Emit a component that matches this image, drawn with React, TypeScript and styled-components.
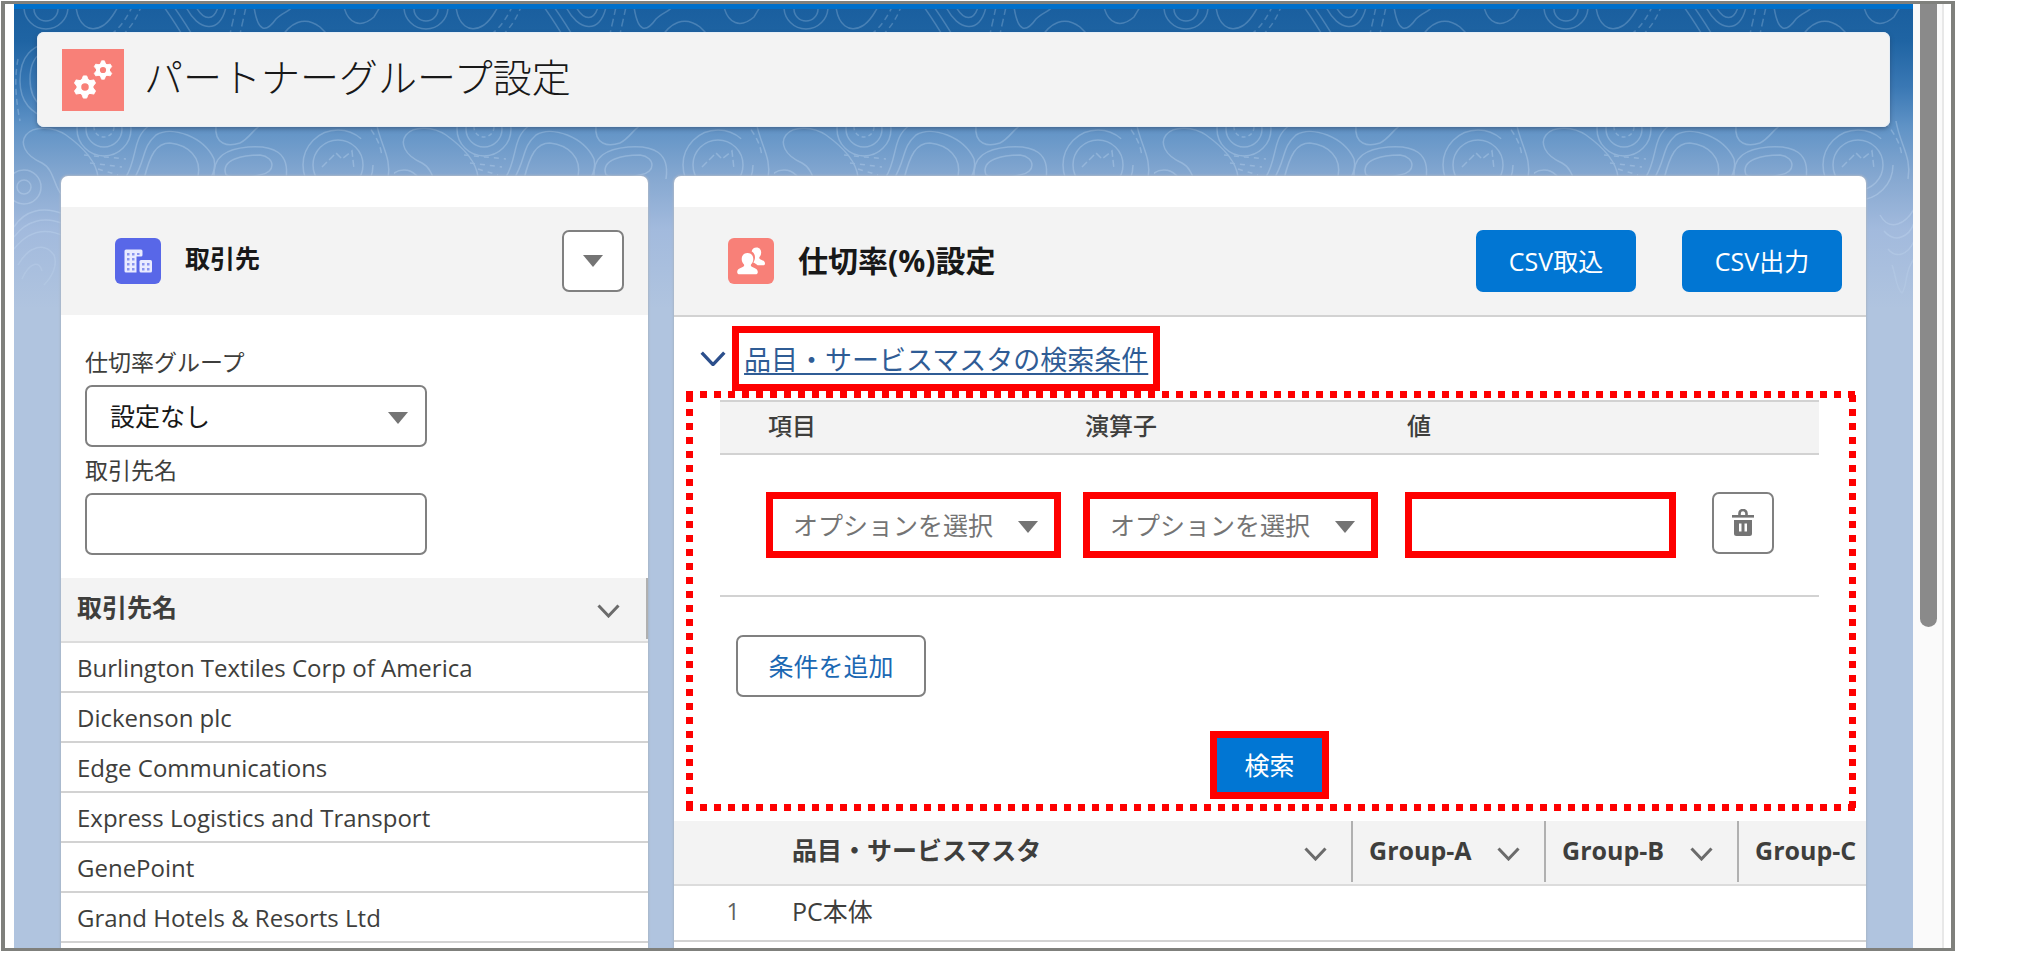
import React from "react";
import styled, { createGlobalStyle, css } from "styled-components";

const color = {
  text: "#3e3e3c",
  strong: "#181818",
  muted: "#747474",
  line: "#d2d2d2",
  band: "#f3f3f3",
  brand: "#0176d3",
  link: "#2f5c95",
  mark: "#fe0000",
  coral: "#f88078",
  indigo: "#5867e8",
  page: "#b0c4df",
};

const GlobalStyle = createGlobalStyle`
  *, *::before, *::after { box-sizing: border-box; }
  body {
    margin: 0;
    background: #fff;
    color: ${color.text};
    font-family: "Open Sans", "Noto Sans CJK JP", sans-serif;
    font-size: 25px;
    line-height: 36px;
    overflow: hidden;
  }
  button, input, select { font: inherit; }
  h1, h2 { margin: 0; }
`;

const Frame = styled.div`
  display: flex;
  height: calc(100vh - 7px);
  margin: 1px 72px 6px 1px;
  padding-left: 9px;
  border: 4px solid #7f807c;
  border-top-width: 3px;
  border-bottom-width: 3px;
  overflow: hidden;
`;

const Page = styled.main`
  position: relative;
  display: flex;
  flex: 1;
  flex-direction: column;
  min-width: 0;
  border-top: 5px solid #0070ca;
  background: linear-gradient(
    180deg,
    #1a5f9f 0,
    #1f64a3 32px,
    #3a78b4 78px,
    #6093c6 118px,
    #84a7d0 166px,
    #a2badd 220px,
    ${color.page} 300px
  );
`;

const Contours = styled.svg`
  position: absolute;
  inset: 0;
  width: 100%;
  height: 320px;
`;

const Track = styled.div`
  flex: none;
  width: 38px;
  padding-left: 7px;
  border-right: 7px solid #fff;
  background: #fafafa;
  box-shadow: inset -2px 0 0 #e8e8e8;
`;

const Thumb = styled.div`
  width: 17px;
  height: 66%;
  border-radius: 0 0 9px 9px;
  background: #8a8a8a;
`;

const PageHeader = styled.header`
  position: relative;
  display: flex;
  align-items: center;
  gap: 20px;
  height: 95px;
  margin: 23px 23px 0 23px;
  padding: 0 25px;
  border-radius: 7px;
  background: ${color.band};
  box-shadow: 0 2px 4px rgba(40, 60, 90, 0.5), inset 0 0 0 1px #e6eef6;
`;

const PageTitle = styled.h1`
  padding-bottom: 6px;
  font-size: 39px;
  font-weight: 300;
  line-height: 56px;
  color: #181818;
`;

const Columns = styled.div`
  position: relative;
  display: grid;
  flex: 1;
  grid-template-columns: minmax(0, 33fr) minmax(0, 67fr);
  gap: 26px;
  min-height: 0;
  margin: 49px 47px 0;
`;

const Card = styled.section`
  overflow: hidden;
  padding-top: 31px;
  border-radius: 7px 7px 0 0;
  background: #fff;
  box-shadow: 0 0 2px 1px #a9b6c8;
`;

const CardHeader = styled.div<{ $lined?: boolean }>`
  display: flex;
  align-items: center;
  gap: 24px;
  height: ${(p) => (p.$lined ? 110 : 108)}px;
  padding: 0 24px 0 54px;
  border-bottom: ${(p) => (p.$lined ? `2px solid ${color.line}` : "0")};
  background: ${color.band};
`;

const CardTitle = styled.h2<{ $large?: boolean }>`
  flex: 1;
  padding-bottom: ${(p) => (p.$large ? 0 : 6)}px;
  font-size: ${(p) => (p.$large ? 30 : 25)}px;
  font-weight: 700;
  color: ${color.strong};
`;

const outlined = css`
  border: 2px solid #808080;
  border-radius: 7px;
  background: #fff;
`;

const IconButton = styled.button`
  ${outlined}
  display: flex;
  flex: none;
  align-items: center;
  justify-content: center;
  width: 62px;
  height: 62px;
  padding: 0;
  color: ${color.muted};
`;

const BrandButton = styled.button`
  width: 160px;
  height: 62px;
  padding: 0;
  border: 0;
  border-radius: 7px;
  background: ${color.brand};
  color: #fff;
`;

const ButtonPair = styled.div`
  display: flex;
  gap: 46px;
`;

const Filters = styled.form`
  display: flex;
  flex-direction: column;
  width: 366px;
  padding: 29px 0 23px 24px;
`;

const FieldLabel = styled.label`
  height: 41px;
  font-size: 23px;
  &:not(:first-child) {
    height: 46px;
    padding-top: 5px;
  }
`;

const marked = css`
  border: 7px solid ${color.mark};
  border-radius: 0;
`;

const SelectBox = styled.div<{ $width?: number }>`
  position: relative;
  width: ${(p) => (p.$width ? `${p.$width}px` : "100%")};
  svg {
    position: absolute;
    top: 50%;
    right: 19px;
    margin-top: -4px;
    pointer-events: none;
  }
  &:has(select[data-marked]) svg {
    right: 23px;
  }
`;

const Select = styled.select<{ $marked?: boolean }>`
  ${outlined}
  width: 100%;
  height: 62px;
  padding: 0 0 0 23px;
  appearance: none;
  color: ${color.strong};
  ${(p) =>
    p.$marked &&
    css`
      ${marked}
      height: 66px;
      padding-left: 20px;
      color: ${color.muted};
    `}
`;

const TextInput = styled.input<{ $marked?: boolean }>`
  ${outlined}
  width: 100%;
  height: 62px;
  padding: 0 20px;
  ${(p) =>
    p.$marked &&
    css`
      ${marked}
      width: 271px;
      height: 66px;
    `}
`;

const AccountTable = styled.table`
  width: 100%;
  border-collapse: separate;
  border-spacing: 0;
  th {
    height: 65px;
    padding: 0 28px 6px 16px;
    border-bottom: 2px solid #dcdcdc;
    background: linear-gradient(#b0b0b0, #b0b0b0) right top / 2px 61px no-repeat ${color.band};
    text-align: left;
  }
  td {
    height: 50px;
    padding: 2px 16px 0;
    border-bottom: 2px solid ${color.line};
    font-size: 24px;
    line-height: 32px;
  }
`;

const HeadCell = styled.div`
  display: flex;
  align-items: center;
  justify-content: space-between;
  svg {
    flex: none;
    margin-top: 8px;
  }
`;

const SectionToggle = styled.div`
  display: flex;
  align-items: center;
  gap: 6px;
  padding: 9px 26px 0;
`;

const SectionLink = styled.a`
  height: 65px;
  padding: 9px 5px 0;
  border: 7px solid ${color.mark};
  color: ${color.link};
  font-size: 27px;
  line-height: 36px;
  text-decoration-thickness: 2px;
  text-underline-offset: 3px;
`;

const dashX = `repeating-linear-gradient(90deg, ${color.mark} 0 7px, transparent 7px 14px)`;
const dashY = `repeating-linear-gradient(180deg, transparent 0 4px, ${color.mark} 4px 11px, transparent 11px 14px)`;

const SearchArea = styled.form`
  display: flex;
  flex-direction: column;
  margin: 0 10px 10px 12px;
  padding: 9px 37px 12px 34px;
  background:
    ${dashX} left top / 100% 7px no-repeat,
    ${dashX} left bottom / 100% 7px no-repeat,
    ${dashY} left top / 7px 100% no-repeat,
    ${dashY} right top / 7px 100% no-repeat;
`;

const ConditionTable = styled.table`
  width: 100%;
  table-layout: fixed;
  border-collapse: separate;
  border-spacing: 0;
  th {
    height: 55px;
    padding: 0 0 4px 48px;
    border: solid ${color.line};
    border-width: 2px 0;
    background: ${color.band};
    font-size: 24px;
    font-weight: 500;
    text-align: left;
  }
  td {
    height: 142px;
    padding: 0 0 0 46px;
    border-bottom: 2px solid ${color.line};
  }
  td:last-child {
    padding: 0 0 4px;
  }
`;

const AddButton = styled.button`
  ${outlined}
  align-self: flex-start;
  width: 190px;
  height: 62px;
  margin: 38px 0 34px 16px;
  padding: 0;
  color: #1b68b3;
`;

const SearchButton = styled.button`
  ${marked}
  align-self: center;
  width: 119px;
  height: 68px;
  padding: 0;
  background: ${color.brand};
  color: #fff;
`;

const RateTable = styled.table`
  width: 1257px;
  table-layout: fixed;
  border-collapse: separate;
  border-spacing: 0;
  th {
    height: 65px;
    padding: 0 26px 5px 16px;
    border-bottom: 2px solid #dcdcdc;
    background: linear-gradient(#b0b0b0, #b0b0b0) right top / 2px 61px no-repeat ${color.band};
    text-align: left;
    white-space: nowrap;
  }
  th:first-child {
    background: ${color.band};
  }
  th:nth-child(2) {
    padding-left: 0;
  }
  td {
    height: 56px;
    padding: 0 0 4px;
    border-bottom: 2px solid ${color.line};
  }
`;

const RowNumber = styled.td`
  font-size: 23px;
  color: #606060;
  text-align: center;
`;

const Triangle = () => (
  <svg width="20" height="12" viewBox="0 0 20 12" aria-hidden="true">
    <path d="M0 0h20L10 12z" fill="#747474" />
  </svg>
);

const Chevron = ({ size = 23, stroke = "#6b6b6b", width = 3 }) => (
  <svg width={size} height={(size * 14) / 23} viewBox="0 0 23 14" aria-hidden="true">
    <path d="M1.5 1.5L11.5 12L21.5 1.5" fill="none" stroke={stroke} strokeWidth={width} />
  </svg>
);

const Gear = ({ x, y, s }: { x: number; y: number; s: number }) => (
  <g transform={`translate(${x} ${y}) scale(${s})`} stroke="#fff" fill="none">
    <circle r="6.5" strokeWidth="5" />
    {[0, 60, 120, 180, 240, 300].map((a) => (
      <path key={a} d="M-3.600 -7L-1.800 -11.800H1.800L3.600 -7z" fill="#fff" strokeWidth="1" strokeLinejoin="round" transform={`rotate(${a})`} />
    ))}
  </g>
);

const GearsIcon = () => (
  <svg width="62" height="62" viewBox="0 0 62 62" aria-hidden="true">
    <rect width="62" height="62" fill={color.coral} />
    <Gear x={23} y={38} s={0.94} />
    <Gear x={41} y={21} s={0.78} />
  </svg>
);

const AccountIcon = () => (
  <svg width="46" height="46" viewBox="0 0 46 46" aria-hidden="true">
    <rect width="46" height="46" rx="6" fill={color.indigo} />
    <path d="M11 11.5h15a1.500 1.500 0 0 1 1.500 1.500v4a1.500 1.500 0 0 1-1.500 1.500h-4.500V34.500H11A1.500 1.500 0 0 1 9.500 33V13A1.500 1.500 0 0 1 11 11.500z" fill="#e9ebff" />
    <rect x="24.500" y="22" width="12.500" height="12.500" rx="1.500" fill="#e9ebff" />
    <g fill="#8a95ef">
      {[15, 20, 25, 30].map((y) => (
        <g key={y}>
          <rect x="12" y={y} width="2.500" height="2.500" />
          <rect x="17" y={y} width="2.500" height="2.500" />
        </g>
      ))}
      <rect x="22" y="15" width="2.500" height="2" />
      {[25, 30].map((y) => (
        <g key={y}>
          <rect x="27" y={y} width="2.500" height="2.500" />
          <rect x="32" y={y} width="2.500" height="2.500" />
        </g>
      ))}
    </g>
  </svg>
);

const PeopleIcon = () => (
  <svg width="46" height="46" viewBox="0 0 46 46" aria-hidden="true">
    <rect width="46" height="46" rx="6" fill={color.coral} />
    <g fill="#fff">
      <path d="M28.500 9.500c3 0 4.700 2.200 4.700 5 0 2-.8 3.500-1.700 4.500-.5.700-.3 1.800.6 2.300 2.300 1 4.900 1.700 4.900 4.200 0 1.300-.8 1.800-1.800 1.800h-5.600c-1-1.500-2.900-2.200-4.300-2.900 1.300-1.800 1.900-3.900 1.600-6-.3-2.400-1.400-4-3.200-5 .4-2.300 2.200-3.900 4.800-3.900z" />
      <path d="M19.500 15c3.600 0 5.800 2.600 5.800 5.900 0 2.300-.9 4.200-2.100 5.300-.7.800-.5 2.100.6 2.600 2.900 1.300 6 2.100 6 5.200 0 1.600-.9 2.300-2.300 2.300h-16c-1.400 0-2.300-.7-2.300-2.300 0-3.100 3.100-3.900 6-5.200 1.100-.5 1.300-1.800.6-2.600-1.200-1.100-2.100-3-2.100-5.300 0-3.300 2.200-5.900 5.800-5.900z" />
    </g>
  </svg>
);

const TrashIcon = () => (
  <svg width="24" height="28" viewBox="0 0 24 28" aria-hidden="true">
    <g fill="none" stroke={color.muted} strokeWidth="2.600">
      <path d="M8.500 7V4.500a3.500 3.500 0 0 1 7 0V7" />
      <path d="M1 7.300H23" />
    </g>
    <path fillRule="evenodd" fill={color.muted} d="M3 11h18v13.500a2.500 2.500 0 0 1-2.500 2.500H5.500a2.500 2.500 0 0 1-2.500-2.500zM8 14.500v8h2.500v-8zM13.500 14.500v8H16v-8z" />
  </svg>
);

const ContourPattern = () => (
  <Contours aria-hidden="true">
    <defs>
      <pattern id="contours" width="380" height="320" patternUnits="userSpaceOnUse">
        <g fill="none" stroke="#cfe3f7" strokeWidth="1.500">
          <circle cx="32" cy="0" r="12" />
          <circle cx="32" cy="-2" r="22" />
          <path d="M62 -2C64 14 74 26 90 16C98 10 100 4 104 -2" />
          <path d="M88 30C104 24 112 10 118 -2M100 32C116 22 122 10 127 -2" strokeDasharray="6 4" />
          <path d="M150 -2C160 12 166 22 172 32M160 -2C170 12 176 22 182 32M172 -2C184 22 206 26 212 -2M182 -2C190 12 200 12 204 -2" />
          <path d="M222 -2L214 34M232 -2L224 34" strokeDasharray="8 4" />
          <path d="M240 -2C244 24 252 24 262 10C268 4 276 2 278 -2M266 30C276 14 290 6 306 18C312 24 316 28 322 34M330 -2C334 14 346 20 360 8L366 -2" />
          <path d="M62 40C30 34 16 46 16 70S30 106 62 104M62 50C34 44 24 56 24 72S36 98 60 96M50 30C14 34 6 50 6 72C6 94 18 104 34 110" />
          <path d="M4 50C0 70 2 92 6 112" strokeDasharray="6 4" />
          <circle cx="90" cy="118" r="10" strokeDasharray="4 3" />
          <circle cx="90" cy="120" r="18" />
          <circle cx="90" cy="120" r="27" />
          <path d="M48 186C40 178 40 160 28 154C10 146 6 134 12 126C20 116 40 118 52 126C66 136 82 150 84 168" />
          <path d="M70 146L112 150M76 154L108 158M84 160L104 166" strokeDasharray="5 5" />
          <path d="M112 168C124 148 118 128 136 116M120 170C132 150 128 138 142 126C158 116 190 128 200 150C202 158 200 164 196 170M130 170C136 146 142 134 156 134C174 136 188 148 184 168" />
          <path d="M202 116C200 136 214 138 226 134C238 128 240 116 254 114" />
          <path d="M200 170C198 146 214 140 234 138C260 136 276 144 272 170M212 166C206 150 230 146 246 146C262 148 262 164 246 166C236 168 222 170 212 166" />
          <circle cx="324" cy="156" r="35" strokeDasharray="190 30" />
          <circle cx="324" cy="156" r="25" />
          <path d="M308 158L322 144L328 150L338 142L340 160" strokeDasharray="7 3" />
          <path d="M362 112C366 136 378 148 374 170" />
          <path d="M352 112C358 124 366 130 368 148" strokeDasharray="6 4" />
          <circle cx="10" cy="178" r="7" />
          <circle cx="10" cy="178" r="17" />
          <path d="M0 218C10 202 28 196 52 206M0 228C12 212 30 206 52 216M0 240C14 222 32 218 52 228M4 256C14 238 30 232 40 246C44 256 38 268 30 276M8 270C16 252 26 252 28 262" />
          <path d="M346 206C356 224 372 214 380 200M350 222C362 236 376 226 380 214M354 240C362 250 374 246 380 232M358 256C362 266 362 280 368 284C374 276 370 262 380 250" />
        </g>
      </pattern>
      <linearGradient id="fade" x1="0" y1="0" x2="0" y2="1">
        <stop offset="0" stopColor="#fff" stopOpacity="0.24" />
        <stop offset="0.6" stopColor="#fff" stopOpacity="0.32" />
        <stop offset="1" stopColor="#fff" stopOpacity="0.1" />
      </linearGradient>
      <mask id="fadeMask">
        <rect width="100%" height="100%" fill="url(#fade)" />
      </mask>
    </defs>
    <rect width="100%" height="100%" fill="url(#contours)" mask="url(#fadeMask)" />
  </Contours>
);

const accounts = [
  "Burlington Textiles Corp of America",
  "Dickenson plc",
  "Edge Communications",
  "Express Logistics and Transport",
  "GenePoint",
  "Grand Hotels & Resorts Ltd",
];

const groups = ["Group-A", "Group-B", "Group-C"];

const AccountsPanel = () => (
  <Card>
    <CardHeader>
      <AccountIcon />
      <CardTitle>取引先</CardTitle>
      <IconButton type="button" aria-label="メニュー">
        <Triangle />
      </IconButton>
    </CardHeader>
    <Filters>
      <FieldLabel htmlFor="rate-group">仕切率グループ</FieldLabel>
      <SelectBox>
        <Select id="rate-group">
          <option>設定なし</option>
        </Select>
        <Triangle />
      </SelectBox>
      <FieldLabel htmlFor="account-name">取引先名</FieldLabel>
      <TextInput id="account-name" type="text" />
    </Filters>
    <AccountTable>
      <thead>
        <tr>
          <th>
            <HeadCell>
              取引先名
              <Chevron />
            </HeadCell>
          </th>
        </tr>
      </thead>
      <tbody>
        {accounts.map((name) => (
          <tr key={name}>
            <td>{name}</td>
          </tr>
        ))}
      </tbody>
    </AccountTable>
  </Card>
);

const OptionSelect = ({ label }: { label: string }) => (
  <SelectBox $width={295}>
    <Select $marked data-marked aria-label={label}>
      <option>オプションを選択</option>
    </Select>
    <Triangle />
  </SelectBox>
);

const RatesPanel = () => (
  <Card>
    <CardHeader $lined>
      <PeopleIcon />
      <CardTitle $large>仕切率(%)設定</CardTitle>
      <ButtonPair>
        <BrandButton type="button">CSV取込</BrandButton>
        <BrandButton type="button">CSV出力</BrandButton>
      </ButtonPair>
    </CardHeader>
    <SectionToggle>
      <Chevron size={26} stroke="#2c4f8c" width={3} />
      <SectionLink href="#conditions">品目・サービスマスタの検索条件</SectionLink>
    </SectionToggle>
    <SearchArea id="conditions">
      <ConditionTable>
        <colgroup>
          <col width="317" />
          <col width="322" />
          <col width="353" />
          <col />
        </colgroup>
        <thead>
          <tr>
            <th>項目</th>
            <th>演算子</th>
            <th>値</th>
            <th aria-label="操作" />
          </tr>
        </thead>
        <tbody>
          <tr>
            <td>
              <OptionSelect label="項目" />
            </td>
            <td>
              <OptionSelect label="演算子" />
            </td>
            <td>
              <TextInput $marked type="text" aria-label="値" />
            </td>
            <td>
              <IconButton type="button" aria-label="削除">
                <TrashIcon />
              </IconButton>
            </td>
          </tr>
        </tbody>
      </ConditionTable>
      <AddButton type="button">条件を追加</AddButton>
      <SearchButton type="button">検索</SearchButton>
    </SearchArea>
    <RateTable>
      <colgroup>
        <col width="118" />
        <col width="561" />
        <col width="193" />
        <col width="193" />
        <col width="193" />
      </colgroup>
      <thead>
        <tr>
          <th aria-label="行番号" />
          <th>
            <HeadCell>
              品目・サービスマスタ
              <Chevron />
            </HeadCell>
          </th>
          {groups.map((group) => (
            <th key={group}>
              <HeadCell>
                {group}
                <Chevron />
              </HeadCell>
            </th>
          ))}
        </tr>
      </thead>
      <tbody>
        <tr>
          <RowNumber>1</RowNumber>
          <td>PC本体</td>
          <td />
          <td />
          <td />
        </tr>
      </tbody>
    </RateTable>
  </Card>
);

export default function App() {
  return (
    <>
      <GlobalStyle />
      <Frame>
        <Page>
          <ContourPattern />
          <PageHeader>
            <GearsIcon />
            <PageTitle>パートナーグループ設定</PageTitle>
          </PageHeader>
          <Columns>
            <AccountsPanel />
            <RatesPanel />
          </Columns>
        </Page>
        <Track>
          <Thumb />
        </Track>
      </Frame>
    </>
  );
}
